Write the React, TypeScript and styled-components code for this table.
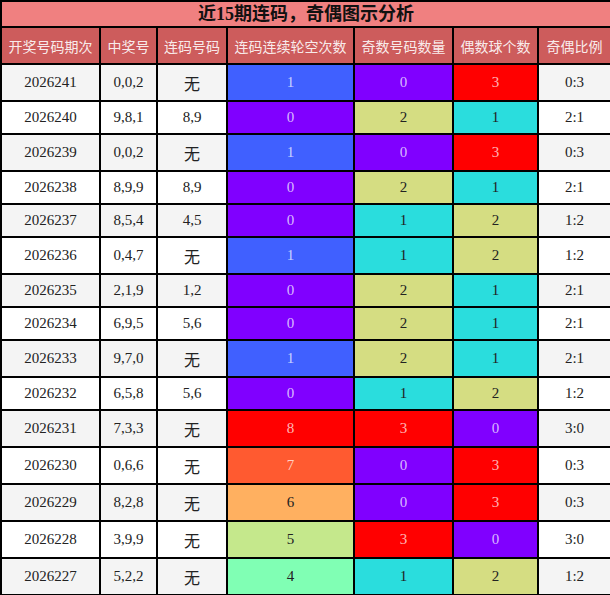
import React from "react";
import styled, { createGlobalStyle } from "styled-components";

const GlobalStyle = createGlobalStyle`
  html, body { margin: 0; padding: 0; background: #ffffff; }
  body { font-family: "Liberation Serif", "Noto Sans CJK SC", serif; }
`;

const Table = styled.table`
  width: 610px;
  table-layout: fixed;
  border-collapse: collapse;
  font-family: "Liberation Serif", "Noto Sans CJK SC", serif;
`;

const TitleCell = styled.th`
  background: #f08080;
  color: #111;
  font-size: 18px;
  font-weight: bold;
  height: 24px;
  padding: 0;
  line-height: 24px;
  border: 2px solid #000;
  text-align: center;
`;

const HeadCell = styled.th`
  background: #cd5c5c;
  color: rgba(255, 255, 255, 0.9);
  font-family: "Noto Sans CJK SC", sans-serif;
  font-size: 14px;
  font-weight: normal;
  height: 35px;
  padding: 0;
  border: 2px solid #000;
  text-align: center;
`;

const Row = styled.tr<{ $alt: boolean }>`
  background: ${(p) => (p.$alt ? "#f4f4f4" : "#ffffff")};
`;

const Cell = styled.td`
  color: #222;
  font-size: 15px;
  padding: 7px 0;
  border: 2px solid #000;
  text-align: center;
`;

const NoneCell = styled(Cell)`
  font-family: "Noto Sans CJK SC", sans-serif;
  font-size: 16px;
  padding: 6px 0 5px;
`;

const ColorCell = styled(Cell)<{ $bg: string; $light: boolean }>`
  background: ${(p) => p.$bg};
  color: ${(p) => (p.$light ? "rgba(255,255,255,0.72)" : "#222")};
`;

type Swatch = { bg: string; light: boolean };

const missColors: Record<number, Swatch> = {
  0: { bg: "#8000ff", light: true },
  1: { bg: "#4060ff", light: true },
  4: { bg: "#80ffb4", light: false },
  5: { bg: "#c5e88c", light: false },
  6: { bg: "#ffb060", light: false },
  7: { bg: "#ff5a30", light: true },
  8: { bg: "#ff0000", light: true },
};

const countColors: Record<number, Swatch> = {
  0: { bg: "#8000ff", light: true },
  1: { bg: "#2adddd", light: false },
  2: { bg: "#d5dd82", light: false },
  3: { bg: "#ff0000", light: true },
};

type Rec = [string, string, string, number, number, number, string];

const rows: Rec[] = [
  ["2026241", "0,0,2", "无", 1, 0, 3, "0:3"],
  ["2026240", "9,8,1", "8,9", 0, 2, 1, "2:1"],
  ["2026239", "0,0,2", "无", 1, 0, 3, "0:3"],
  ["2026238", "8,9,9", "8,9", 0, 2, 1, "2:1"],
  ["2026237", "8,5,4", "4,5", 0, 1, 2, "1:2"],
  ["2026236", "0,4,7", "无", 1, 1, 2, "1:2"],
  ["2026235", "2,1,9", "1,2", 0, 2, 1, "2:1"],
  ["2026234", "6,9,5", "5,6", 0, 2, 1, "2:1"],
  ["2026233", "9,7,0", "无", 1, 2, 1, "2:1"],
  ["2026232", "6,5,8", "5,6", 0, 1, 2, "1:2"],
  ["2026231", "7,3,3", "无", 8, 3, 0, "3:0"],
  ["2026230", "0,6,6", "无", 7, 0, 3, "0:3"],
  ["2026229", "8,2,8", "无", 6, 0, 3, "0:3"],
  ["2026228", "3,9,9", "无", 5, 3, 0, "3:0"],
  ["2026227", "5,2,2", "无", 4, 1, 2, "1:2"],
];

const widths = [99, 57, 70, 127, 99, 85, 73];
const heads = ["开奖号码期次", "中奖号", "连码号码", "连码连续轮空次数", "奇数号码数量", "偶数球个数", "奇偶比例"];

export default function App() {
  return (
    <>
      <GlobalStyle />
      <Table>
        <colgroup>
          {widths.map((w, i) => (
            <col key={i} style={{ width: w }} />
          ))}
        </colgroup>
        <thead>
          <tr>
            <TitleCell colSpan={7}>近15期连码，奇偶图示分析</TitleCell>
          </tr>
          <tr>
            {heads.map((h) => (
              <HeadCell key={h}>{h}</HeadCell>
            ))}
          </tr>
        </thead>
        <tbody>
          {rows.map((r, i) => {
            const m = missColors[r[3]];
            const o = countColors[r[4]];
            const e = countColors[r[5]];
            return (
              <Row key={r[0]} $alt={i % 2 === 0}>
                <Cell>{r[0]}</Cell>
                <Cell>{r[1]}</Cell>
                {r[2] === "无" ? <NoneCell>{r[2]}</NoneCell> : <Cell>{r[2]}</Cell>}
                <ColorCell $bg={m.bg} $light={m.light}>{r[3]}</ColorCell>
                <ColorCell $bg={o.bg} $light={o.light}>{r[4]}</ColorCell>
                <ColorCell $bg={e.bg} $light={e.light}>{r[5]}</ColorCell>
                <Cell>{r[6]}</Cell>
              </Row>
            );
          })}
        </tbody>
      </Table>
    </>
  );
}
